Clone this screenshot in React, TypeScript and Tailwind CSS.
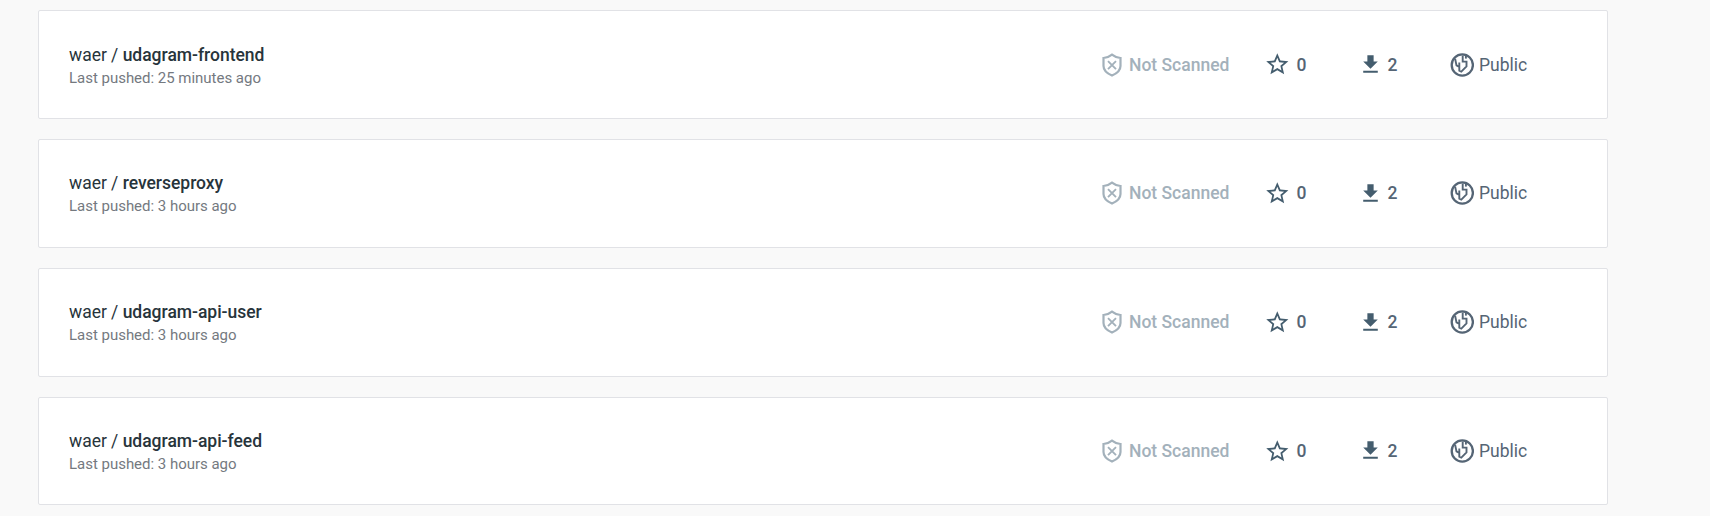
const repos = [
  { name: "udagram-frontend", pushed: "25 minutes ago" },
  { name: "reverseproxy", pushed: "3 hours ago" },
  { name: "udagram-api-user", pushed: "3 hours ago" },
  { name: "udagram-api-feed", pushed: "3 hours ago" },
];

function ShieldIcon() {
  return (
    <svg viewBox="0 0 20 24" className="h-6 w-5 shrink-0" fill="none" stroke="currentColor" strokeWidth="2.2">
      <path d="M10 1.6C7.8 3.4 5 4.6 1.5 5V13C1.5 17.4 5 20.4 10 22.6C15 20.4 18.5 17.4 18.5 13V5C15 4.6 12.2 3.4 10 1.6Z" />
      <path d="M6 8.2L14 16.2M14 8.2L6 16.2" strokeWidth="1.9" />
    </svg>
  );
}

function StarIcon() {
  return (
    <svg viewBox="0 0 24 24" className="size-[26.6px] shrink-0" fill="currentColor">
      <path d="M22 9.24l-7.19-.62L12 2 9.19 8.63 2 9.24l5.46 4.73L5.82 21 12 17.27 18.18 21l-1.63-7.03L22 9.24zM12 15.4l-3.76 2.27 1-4.28-3.32-2.88 4.38-.38L12 6.1l1.71 4.04 4.38.38-3.32 2.88 1 4.28L12 15.4z" />
    </svg>
  );
}

function DownloadIcon() {
  return (
    <svg viewBox="0 0 24 24" className="size-[25px] shrink-0" fill="currentColor">
      <path d="M19 9h-4V3H9v6H5l7 7 7-7zM5 18v2h14v-2H5z" />
    </svg>
  );
}

function GlobeIcon() {
  return (
    <svg viewBox="0 0 24 24" className="size-6 shrink-0" fill="none" stroke="currentColor" strokeWidth="2.3">
      <circle cx="12.3" cy="12" r="10.6" />
      <path d="M5.1 5.6L6.5 12.4L9.3 14V17.6L11.3 18.6L16.5 13.4V8.6H12.7V2.4M9.3 14V9.6" strokeWidth="1.9" />
      <path d="M15.9 3V5.6" strokeWidth="1.9" />
    </svg>
  );
}

export default function App() {
  return (
    <main className="h-[516px] overflow-hidden bg-[#f9f9f9] pl-[38px] pt-[10.45px] font-['Roboto',sans-serif]">
      <div className="flex w-[1570px] flex-col gap-5">
        {repos.map((r) => (
          <article key={r.name} className="flex h-[108.7px] items-center rounded-[2px] border border-[#e1e2e6] bg-white">
            <div className="w-[1063px] pl-[30px] pt-[3.6px]">
              <h2 className="text-[17.5px] leading-6 tracking-[-0.02px] text-[#27343b]">waer / <span className="font-medium">{r.name}</span></h2>
              <p className="text-[15px] leading-[23.7px] tracking-[-0.02px] text-[#74797f]">Last pushed: {r.pushed}</p>
            </div>
            <div className="flex items-center text-[17.5px] text-[#556575]">
              <div className="flex w-[162px] items-center gap-[7px] font-medium text-[#a3b1bb]"><ShieldIcon />Not Scanned</div>
              <div className="flex w-[94px] items-center gap-[6px] font-medium"><span className="text-[#445d6e]"><StarIcon /></span>0</div>
              <div className="flex w-[92.3px] items-center gap-[4.5px] font-medium"><span className="text-[#445d6e]"><DownloadIcon /></span>2</div>
              <div className="flex items-center gap-[4.7px]"><GlobeIcon />Public</div>
            </div>
          </article>
        ))}
      </div>
    </main>
  );
}
